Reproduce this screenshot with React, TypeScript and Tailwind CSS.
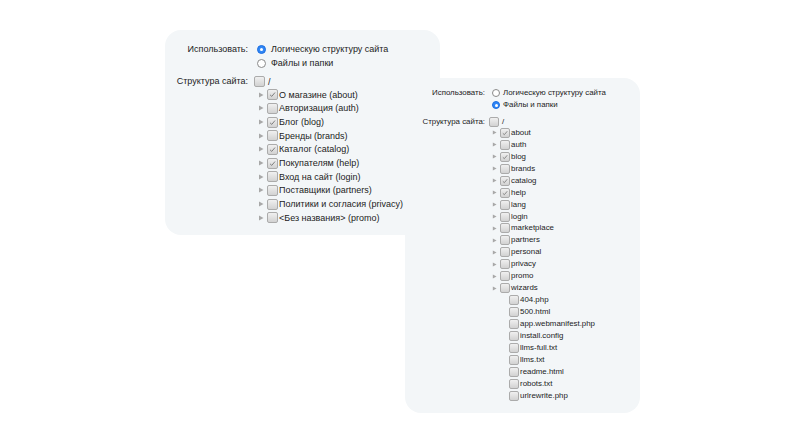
import React from "react"

type Item = { label: string; checked?: boolean; folder?: boolean }

const logicItems: Item[] = [
  { label: "О магазине (about)", checked: true, folder: true },
  { label: "Авторизация (auth)", folder: true },
  { label: "Блог (blog)", checked: true, folder: true },
  { label: "Бренды (brands)", folder: true },
  { label: "Каталог (catalog)", checked: true, folder: true },
  { label: "Покупателям (help)", checked: true, folder: true },
  { label: "Вход на сайт (login)", folder: true },
  { label: "Поставщики (partners)", folder: true },
  { label: "Политики и согласия (privacy)", folder: true },
  { label: "<Без названия> (promo)", folder: true },
]

const fileItems: Item[] = [
  { label: "about", checked: true, folder: true },
  { label: "auth", folder: true },
  { label: "blog", checked: true, folder: true },
  { label: "brands", folder: true },
  { label: "catalog", checked: true, folder: true },
  { label: "help", checked: true, folder: true },
  { label: "lang", folder: true },
  { label: "login", folder: true },
  { label: "marketplace", folder: true },
  { label: "partners", folder: true },
  { label: "personal", folder: true },
  { label: "privacy", folder: true },
  { label: "promo", folder: true },
  { label: "wizards", folder: true },
  { label: "404.php" },
  { label: "500.html" },
  { label: "app.webmanifest.php" },
  { label: "install.config" },
  { label: "llms-full.txt" },
  { label: "llms.txt" },
  { label: "readme.html" },
  { label: "robots.txt" },
  { label: "urlrewrite.php" },
]

// серый чекбокс в стиле macOS
const Check = ({ checked, small }: { checked?: boolean; small?: boolean }) => (
  <span
    className={
      "relative inline-flex shrink-0 items-center justify-center rounded-[2px] border border-[#ababab] bg-gradient-to-b from-[#f0f0f0] to-[#d2d2d2] " +
      (small ? "h-[10px] w-[10px]" : "h-[11px] w-[11px]")
    }
  >
    {checked && (
      <svg viewBox="0 0 10 10" className={small ? "h-[8px] w-[8px]" : "h-[9px] w-[9px]"}>
        <path d="M2.3 5.4 L4.2 7.1 L7.8 2.8" fill="none" stroke="#7d7d7d" strokeWidth="1.1" />
      </svg>
    )}
  </span>
)

const Radio = ({ on, small }: { on?: boolean; small?: boolean }) => (
  <span
    className={
      "inline-flex shrink-0 items-center justify-center rounded-full border " +
      (small ? "h-[8px] w-[8px] " : "h-[9px] w-[9px] ") +
      (on ? "border-[#1f6fe0] bg-[#2f86f6]" : "border-[#8a8a8a] bg-white")
    }
  >
    {on && <span className="h-[3px] w-[3px] rounded-full bg-white" />}
  </span>
)

const Arrow = ({ small }: { small?: boolean }) => (
  <svg viewBox="0 0 6 6" className={small ? "h-[5px] w-[5px]" : "h-[6px] w-[6px]"}>
    <path d="M1 0.5 L5.5 3 L1 5.5 Z" fill="#a8a8a8" />
  </svg>
)

const Card1 = () => (
  <div className="absolute left-[165px] top-[30px] h-[205px] w-[275px] rounded-[16px] bg-[#f3f6f8] pl-[11px] pt-[12px] text-[9px] leading-[14px] text-[#1c1c1c]">
    <div className="flex">
      <div className="w-[72px] text-right">Использовать:</div>
      <div className="ml-[9px] flex flex-col">
        <div className="flex items-center gap-[5px]">
          <Radio on />
          <span>Логическую структуру сайта</span>
        </div>
        <div className="flex items-center gap-[5px]">
          <Radio />
          <span>Файлы и папки</span>
        </div>
      </div>
    </div>
    <div className="mt-[5px] flex">
      <div className="w-[72px] text-right leading-[13px]">Структура сайта:</div>
      <div className="ml-[6px] flex flex-col">
        <div className="flex h-[13px] items-center gap-[3px]">
          <Check />
          <span>/</span>
        </div>
        {logicItems.map((item, i) => (
          <div key={i} className="flex h-[13.67px] items-center">
            <span className="flex w-[13px] justify-center">
              <Arrow />
            </span>
            <Check checked={item.checked} />
            <span className="ml-[1px]">{item.label}</span>
          </div>
        ))}
      </div>
    </div>
  </div>
)

const Card2 = () => (
  <div className="absolute left-[405px] top-[78px] h-[335px] w-[235px] rounded-[16px] bg-[#f3f6f8] pl-[17px] pt-[9px] text-[7.9px] leading-[12px] text-[#1c1c1c]">
    <div className="flex">
      <div className="w-[63px] text-right">Использовать:</div>
      <div className="ml-[7px] flex flex-col">
        <div className="flex items-center gap-[3px]">
          <Radio small />
          <span>Логическую структуру сайта</span>
        </div>
        <div className="flex items-center gap-[3px]">
          <Radio on small />
          <span>Файлы и папки</span>
        </div>
      </div>
    </div>
    <div className="mt-[5px] flex">
      <div className="w-[63px] text-right leading-[11px]">Структура сайта:</div>
      <div className="ml-[4px] flex flex-col">
        <div className="flex h-[11px] items-center gap-[3px]">
          <Check small />
          <span>/</span>
        </div>
        {fileItems.map((item, i) => (
          <div key={i} className="flex h-[11.95px] items-center">
            {item.folder ? (
              <span className="flex w-[11px] justify-center">
                <Arrow small />
              </span>
            ) : (
              <span className="w-[20px]" />
            )}
            <Check checked={item.checked} small />
            <span className="ml-[1px]">{item.label}</span>
          </div>
        ))}
      </div>
    </div>
  </div>
)

export default function App() {
  return (
    <div className="relative h-[425px] w-[804px] overflow-hidden bg-white font-['Liberation_Sans',Arial,sans-serif]">
      <Card1 />
      <Card2 />
    </div>
  )
}
